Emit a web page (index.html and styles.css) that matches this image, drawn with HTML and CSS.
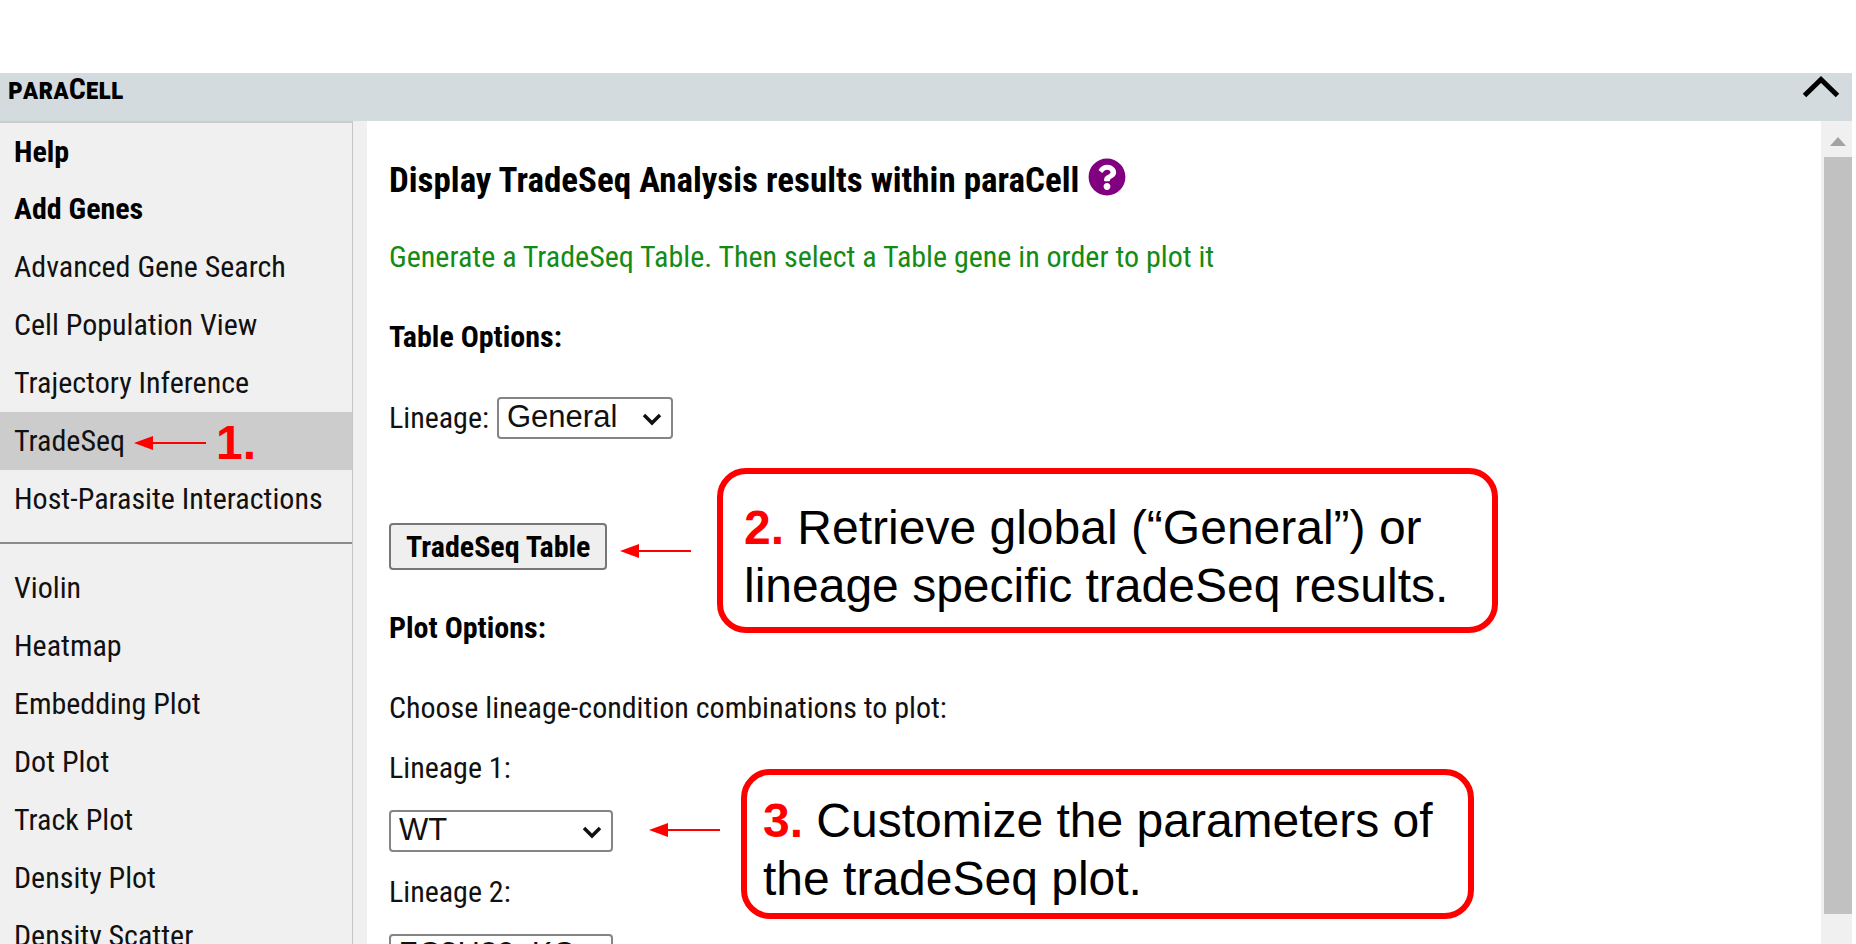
FILE: index.html
```html
<!DOCTYPE html>
<html lang="en">
<head>
<meta charset="utf-8">
<title>paraCell</title>
<link rel="stylesheet" href="styles.css">
</head>
<body>
<div class="app">
  <header class="topbar">
    <h1 class="brand">paraCell</h1>
    <button class="collapse" type="button" aria-label="Collapse">
      <svg width="38" height="22" viewBox="0 0 38 22"><path d="M2.500 19.500 19 3.500 35.500 19.500" fill="none" stroke="#000" stroke-width="5"/></svg>
    </button>
  </header>
  <div class="body">
    <nav class="sidebar">
      <a class="item strong" href="#help">Help</a>
      <a class="item strong" href="#add">Add Genes</a>
      <a class="item" href="#search">Advanced Gene Search</a>
      <a class="item" href="#population">Cell Population View</a>
      <a class="item" href="#trajectory">Trajectory Inference</a>
      <a class="item active" href="#tradeseq">TradeSeq</a>
      <a class="item" href="#host">Host-Parasite Interactions</a>
      <hr class="divider">
      <a class="item" href="#violin">Violin</a>
      <a class="item" href="#heatmap">Heatmap</a>
      <a class="item" href="#embedding">Embedding Plot</a>
      <a class="item" href="#dot">Dot Plot</a>
      <a class="item" href="#track">Track Plot</a>
      <a class="item" href="#density">Density Plot</a>
      <a class="item" href="#scatter">Density Scatter</a>
    </nav>
    <main class="content">
      <h2 class="title">Display TradeSeq Analysis results within paraCell
        <svg class="help" width="38" height="38" viewBox="0 0 512 512"><path fill="#800080" d="M504 256c0 137-111 248-248 248S8 393 8 256 119 8 256 8s248 111 248 248zM262.700 90c-54.500 0-89.300 23-116.500 63.800-3.500 5.300-2.400 12.400 2.700 16.300l34.700 26.300c5.200 3.900 12.600 3 16.700-2.100 17.900-22.700 30.100-35.800 57.300-35.800 20.400 0 45.700 13.100 45.700 33 0 15-12.400 22.700-32.500 34C247.100 238.500 216 254.900 216 296v4c0 6.600 5.400 12 12 12h56c6.600 0 12-5.400 12-12v-1.300c0-28.500 83.200-29.600 83.200-106.700 0-58-60.200-102-116.500-102zM256 338c-25.400 0-46 20.600-46 46s20.600 46 46 46 46-20.600 46-46-20.600-46-46-46z"/></svg>
      </h2>
      <p class="hint">Generate a TradeSeq Table. Then select a Table gene in order to plot it</p>
      <h3 class="section">Table Options:</h3>
      <div class="field">
        <label for="lineage">Lineage:</label>
        <span class="pick"><select id="lineage"><option>General</option></select><svg class="chev" width="20" height="13" viewBox="0 0 20 13"><path d="M2 2l8 8 8-8" fill="none" stroke="#111" stroke-width="3.500"/></svg></span>
      </div>
      <button class="run" type="button">TradeSeq Table</button>
      <h3 class="section plot">Plot Options:</h3>
      <p class="lead">Choose lineage-condition combinations to plot:</p>
      <label class="row" for="lin1">Lineage 1:</label>
      <span class="pick wide"><select id="lin1"><option>WT</option></select><svg class="chev" width="20" height="13" viewBox="0 0 20 13"><path d="M2 2l8 8 8-8" fill="none" stroke="#111" stroke-width="3.500"/></svg></span>
      <label class="row" for="lin2">Lineage 2:</label>
      <span class="pick wide"><select id="lin2"><option>ZC3H20_KO</option></select><svg class="chev" width="20" height="13" viewBox="0 0 20 13"><path d="M2 2l8 8 8-8" fill="none" stroke="#111" stroke-width="3.500"/></svg></span>
    </main>
    <div class="scrollbar">
      <svg class="up" width="16" height="9" viewBox="0 0 16 9"><path d="M0 9 8 0 16 9z" fill="#a3a3a3"/></svg>
      <div class="thumb"></div>
    </div>
  </div>
</div>

<div class="note one">
  <svg class="arrow" width="72" height="14" viewBox="0 0 72 14"><path d="M0 7 19 0V14z" fill="red"/><path d="M18 7H72" stroke="red" stroke-width="2"/></svg>
  <b class="num">1.</b>
</div>
<div class="note two">
  <svg class="arrow" width="72" height="14" viewBox="0 0 72 14"><path d="M0 7 19 0V14z" fill="red"/><path d="M18 7H71" stroke="red" stroke-width="2"/></svg>
  <p class="callout"><b class="num">2.</b> Retrieve global (“General”) or<br>lineage specific tradeSeq results.</p>
</div>
<div class="note three">
  <svg class="arrow" width="72" height="14" viewBox="0 0 72 14"><path d="M0 7 19 0V14z" fill="red"/><path d="M18 7H71" stroke="red" stroke-width="2"/></svg>
  <p class="callout"><b class="num">3.</b> Customize the parameters of<br>the tradeSeq plot.</p>
</div>
</body>
</html>
```
FILE: styles.css
```css
* { box-sizing: border-box; }
body {
  margin: 0;
  background: #fff;
  color: #000;
  font: 30px/40px "Roboto Condensed", Roboto, sans-serif;
  overflow: hidden;
}
h1, h2, h3, p { margin: 0; }
.app {
  display: flex;
  flex-direction: column;
  height: 100vh;
  padding: 73px 4px 0 0;
}
.topbar {
  display: flex;
  justify-content: space-between;
  align-items: flex-start;
  height: 48px;
  flex: none;
  padding: 0 12px 0 8px;
  background: #d3dbde;
}
.brand { font-size: 30px; line-height: 31px; font-variant: small-caps; }
.collapse { padding: 3px 0 0; border: 0; background: none; line-height: 0; }
.body { display: flex; flex: 1; min-height: 0; background: #f0f0f0; }
.sidebar {
  flex: none;
  width: 353px;
  border-top: 2px solid #ccc;
  border-right: 1px solid #c4c4c4;
  padding-top: 1px;
  overflow: hidden;
}
.item {
  display: block;
  height: 58px;
  padding-left: 14px;
  line-height: 58px;
  color: #111;
  text-decoration: none;
  white-space: nowrap;
}
.strong { height: 57px; line-height: 56px; font-weight: 700; color: #000; }
.active { background: #ccc; }
.divider { margin: 14px 0 15px; border: 0; border-top: 2px solid #8a8a8a; }
.content {
  flex: 1;
  display: flex;
  flex-direction: column;
  align-items: flex-start;
  margin-left: 14px;
  padding: 40px 22px 0;
  background: #fff;
  overflow: hidden;
  color: #111;
}
.content > * { flex-shrink: 0; }
.title, .section { color: #000; font-weight: 700; }
.title { display: flex; align-items: center; gap: 9px; font-size: 35px; }
.help { margin: -4px 0 4px; }
.hint { margin-top: 36px; color: #148b14; }
.section { margin-top: 40px; font-size: 30px; }
.section.plot { margin-top: 38px; }
.field { display: flex; align-items: center; gap: 8px; margin-top: 40px; }
.pick { display: block; position: relative; width: 176px; height: 42px; }
.pick.wide { width: 224px; margin-top: 22px; }
select {
  appearance: none;
  width: 100%;
  height: 42px;
  padding: 0 8px 2px;
  border: 2px solid #858585;
  border-radius: 4px;
  background: #fff;
  color: #111;
  font: 31px/34px "Liberation Sans", Arial, sans-serif;
}
.chev { position: absolute; right: 11px; top: 16px; }
.run {
  height: 47px;
  margin-top: 84px;
  padding: 0 15px;
  border: 2px solid #777;
  border-radius: 4px;
  background: #efefef;
  color: #000;
  font: 700 30px/40px "Roboto Condensed", Roboto, sans-serif;
}
.lead { margin-top: 40px; }
.row { margin-top: 20px; }
.scrollbar {
  display: flex;
  flex-direction: column;
  align-items: center;
  flex: none;
  width: 31px;
  padding: 16px 0 30px 3px;
}
.thumb { width: 28px; flex: 1; margin-top: 11px; background: #c1c1c1; }
.note { position: absolute; display: flex; align-items: center; font: 48px/58px "Liberation Sans", Arial, sans-serif; }
.arrow { flex: none; }
.num { color: red; }
.one { left: 134px; top: 414px; gap: 10px; }
.two { left: 620px; top: 468px; gap: 25px; }
.three { left: 649px; top: 769px; gap: 20px; }
.three .arrow { align-self: flex-start; margin-top: 54px; }
.callout {
  padding: 25px 44px 12px 21px;
  border: 6px solid red;
  border-radius: 29px;
  background: #fff;
  white-space: nowrap;
}
.three .callout { padding: 17px 35px 5px 16px; }
```
